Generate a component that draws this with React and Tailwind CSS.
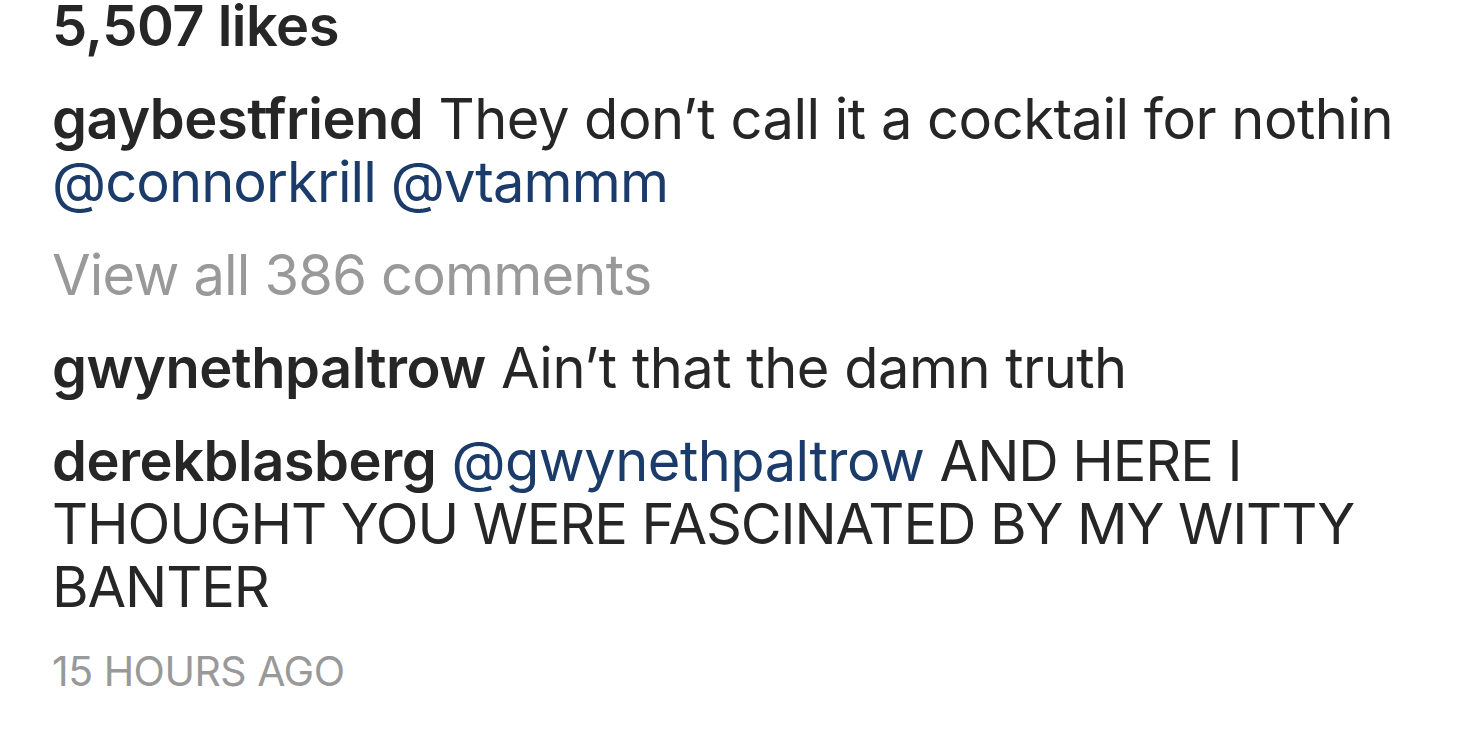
export default function App() {
  const font = { fontFamily: 'Inter, "Liberation Sans", sans-serif' };
  return (
    <div className="w-[1468px] h-[730px] bg-white overflow-hidden pl-[52px] text-[#262626]" style={font}>
      <div className="flex flex-col text-[56px] leading-[63px] tracking-[-0.5px]">
        <div className="font-semibold leading-[53px]">5,507 likes</div>
        <div className="mt-[35px]">
          <span className="font-semibold">gaybestfriend</span> They don’t call it a cocktail for nothin
          <br />
          <span className="text-[#1b3b6b] tracking-[-0.9px]">@connorkrill @vtammm</span>
        </div>
        <div className="mt-[30px] text-[#999999] tracking-[-0.8px]">View all 386 comments</div>
        <div className="mt-[30px]">
          <span className="font-semibold">gwynethpaltrow</span> Ain’t that the damn truth
        </div>
        <div className="mt-[30px]">
          <span className="font-semibold">derekblasberg</span> <span className="text-[#1b3b6b]">@gwynethpaltrow</span> <span className="tracking-[-1.1px]">AND HERE I</span>
          <br />
          <span className="tracking-[-1.1px]">THOUGHT YOU WERE FASCINATED BY MY WITTY</span>
          <br />
          <span className="tracking-[-1.1px]">BANTER</span>
        </div>
        <div className="mt-[27px] text-[41px] leading-[50px] tracking-[-0.5px] text-[#999999]">15 HOURS AGO</div>
      </div>
    </div>
  );
}
